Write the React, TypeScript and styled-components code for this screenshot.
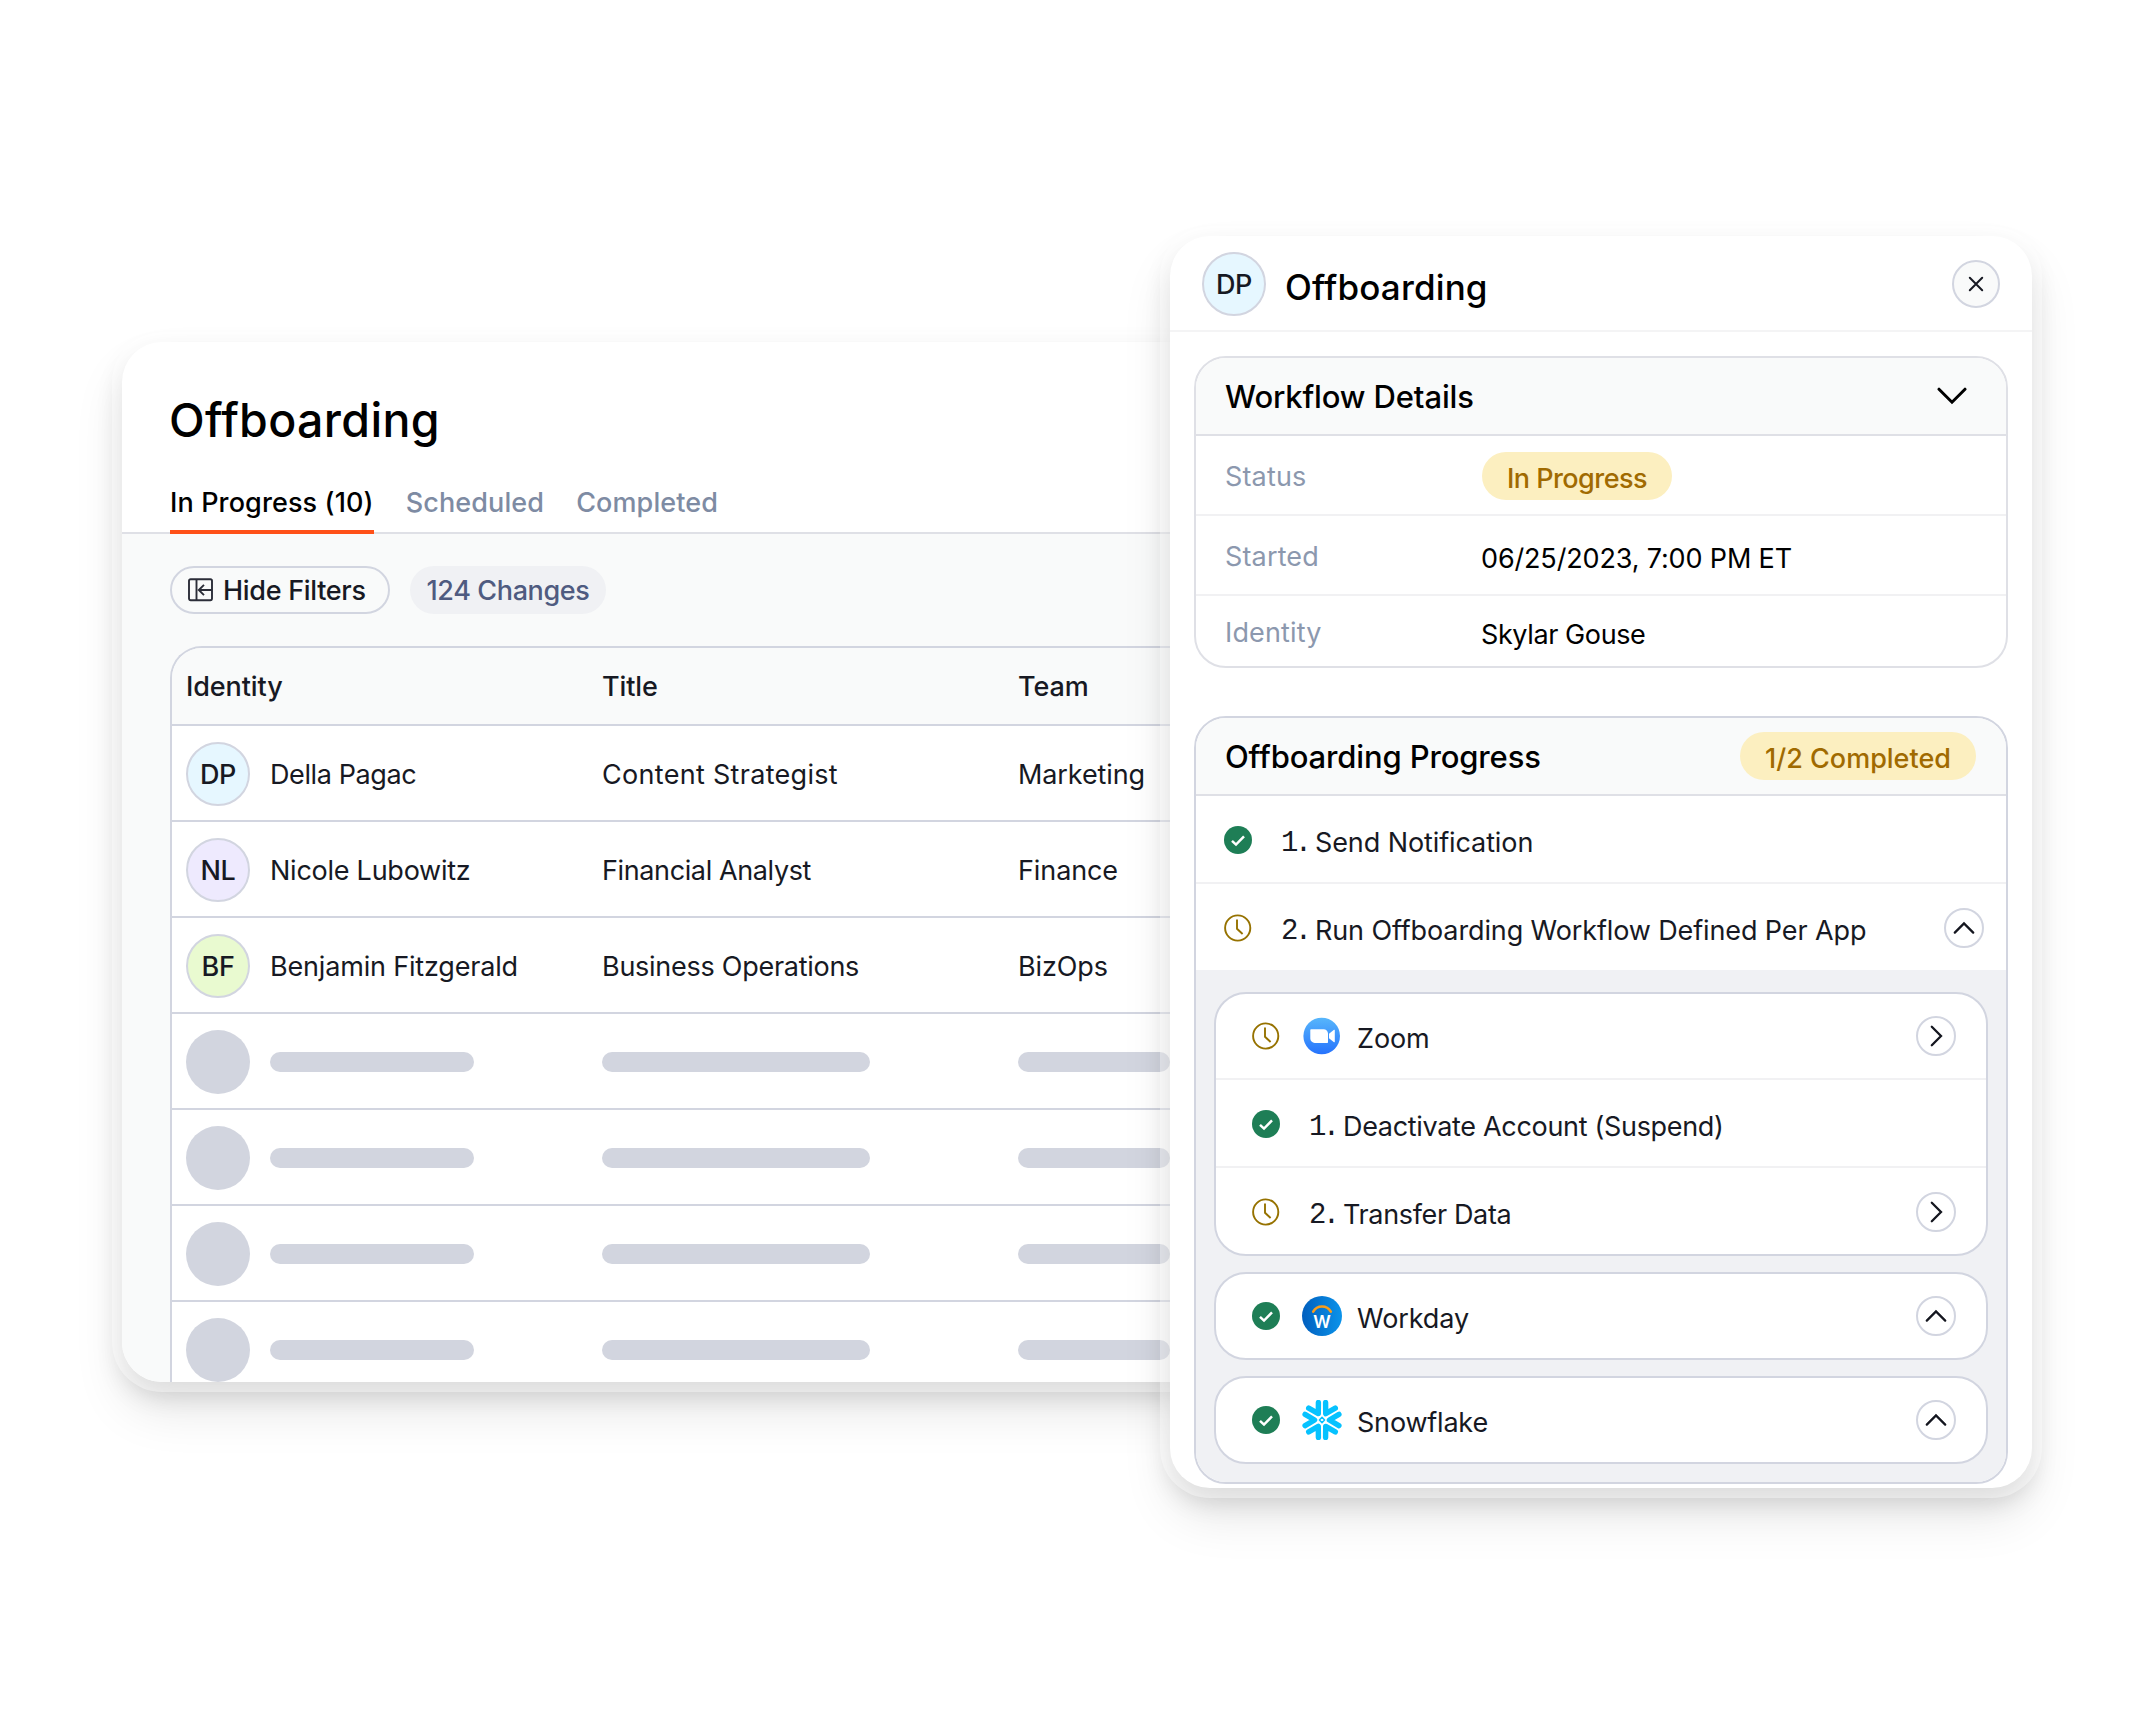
import React from "react";
import styled, { createGlobalStyle, css } from "styled-components";

// === Global ===

const GlobalStyle = createGlobalStyle`
  :root {
    --color-white: #ffffff;
    --color-surface: #f9fafa;
    --color-sunken: #f0f1f4;
    --color-border: #d2d5e0;
    --color-border-soft: #dfe0e6;
    --color-border-light: #f1f1f3;
    --color-skeleton: #d2d5df;
    --color-text: #000000;
    --color-text-primary: #171923;
    --color-text-muted: #8c98ae;
    --color-accent: #ff5018;
    --weight-medium: 500;
  }

  * {
    box-sizing: border-box;
  }

  body {
    margin: 0;
    background: var(--color-white);
    font-family: Inter, "Liberation Sans", sans-serif;
    font-size: 27px;
    line-height: 30px;
    color: var(--color-text-primary);
  }
`;

// === Shared styles ===

const Stage = styled.main`
  width: 2151px;
  height: 1721px;
  padding: 236px 0 0 122px;
  display: flex;
  align-items: flex-start;
  overflow: hidden;
`;

const cardFrame = css`
  flex: none;
  border-radius: 40px;
  background: var(--color-white);
  box-shadow:
    0 0 0 10px rgba(255, 255, 255, 0.4),
    0 12px 26px rgba(0, 0, 0, 0.15),
    0 28px 50px rgba(0, 0, 0, 0.1);
`;

const Txt = styled.span<{ $track?: number }>`
  padding-top: 2px;
  white-space: nowrap;
  letter-spacing: ${(props) => props.$track ?? -0.1}px;
`;

const Avatar = styled.div<{ $color: string }>`
  flex: none;
  width: 64px;
  height: 64px;
  padding-top: 1px;
  border: 2px solid var(--color-border);
  border-radius: 50%;
  background: ${(props) => props.$color};
  display: flex;
  align-items: center;
  justify-content: center;
  font-weight: 500;
  letter-spacing: -0.3px;
`;

// === List card ===

const ListCard = styled.section`
  ${cardFrame}
  width: 1100px;
  height: 1040px;
  margin-top: 106px;
  display: flex;
  flex-direction: column;
`;

const ListTitle = styled.h1`
  margin: 0;
  padding: 48px 47px 0;
  font-size: 46.5px;
  font-weight: var(--weight-medium);
  line-height: 60px;
  letter-spacing: 0.35px;
  color: var(--color-text);
`;

const Tabs = styled.nav`
  display: flex;
  gap: 32px;
  margin-top: 38px;
  padding: 0 48px;
  box-shadow: inset 0 -2px 0 var(--color-border-soft);
`;

const Tab = styled.a<{ $active?: boolean }>`
  padding-bottom: 12px;
  border-bottom: 4px solid
    ${(props) => (props.$active ? "var(--color-accent)" : "transparent")};
  font-weight: var(--weight-medium);
  letter-spacing: 0.12px;
  color: ${(props) => (props.$active ? "var(--color-text)" : "#7e8ba3")};
`;

const ListBody = styled.div`
  flex: 1;
  min-height: 0;
  padding: 32px 0 0 48px;
  border-radius: 0 0 40px 40px;
  background: var(--color-surface);
  overflow: hidden;
`;

const Toolbar = styled.div`
  display: flex;
  gap: 20px;
`;

const FilterButton = styled.button`
  width: 220px;
  height: 48px;
  padding: 0 0 0 16px;
  border: 2px solid var(--color-border);
  border-radius: 24px;
  background: var(--color-surface);
  display: flex;
  align-items: center;
  gap: 9px;
  font: inherit;
  font-weight: var(--weight-medium);
  color: inherit;
`;

const CountPill = styled.div`
  width: 196px;
  height: 48px;
  border-radius: 24px;
  background: var(--color-sunken);
  display: flex;
  align-items: center;
  justify-content: center;
  font-weight: var(--weight-medium);
  color: #4f5b80;
`;

const Table = styled.div`
  margin-top: 32px;
  border: 2px solid var(--color-border);
  border-right: none;
  border-radius: 32px 0 0 0;
  overflow: hidden;
`;

const TableRow = styled.div<{ $head?: boolean }>`
  display: grid;
  grid-template-columns: 416px 416px 1fr;
  align-items: center;
  height: ${(props) => (props.$head ? 78 : 96)}px;
  padding: ${(props) => (props.$head ? 0 : 2)}px 0 0 14px;
  border-bottom: 2px solid var(--color-border);
  background: ${(props) =>
    props.$head ? "var(--color-surface)" : "var(--color-white)"};
  font-weight: ${(props) => (props.$head ? "var(--weight-medium)" : 400)};
`;

const IdentityCell = styled.div`
  display: flex;
  align-items: center;
  gap: 20px;
`;

const SkeletonDot = styled.div`
  width: 64px;
  height: 64px;
  border-radius: 50%;
  background: var(--color-skeleton);
`;

const SkeletonBar = styled.div<{ $width: number }>`
  width: ${(props) => props.$width}px;
  height: 20px;
  border-radius: 10px;
  background: var(--color-skeleton);
`;

// === Detail card ===

const DetailCard = styled.section`
  ${cardFrame}
  position: relative;
  width: 862px;
  height: 1252px;
  margin-left: -52px;
`;

const DetailHeader = styled.header`
  height: 96px;
  padding: 2px 32px 0;
  border-bottom: 2px solid #f4f4f5;
  display: flex;
  align-items: center;
`;

const DetailTitle = styled.h2`
  flex: 1;
  margin: 0;
  padding: 5px 0 0 19px;
  font-size: 35px;
  font-weight: var(--weight-medium);
  line-height: 44px;
  letter-spacing: 0.15px;
  color: var(--color-text);
`;

const CloseButton = styled.button`
  width: 48px;
  height: 48px;
  padding: 0;
  border: 2px solid var(--color-border);
  border-radius: 50%;
  background: var(--color-surface);
  display: flex;
  align-items: center;
  justify-content: center;
`;

const DetailBody = styled.div`
  padding: 24px 24px 0;
  display: flex;
  flex-direction: column;
  gap: 48px;
`;

const Panel = styled.div<{ $soft?: boolean }>`
  border: 2px solid
    ${(props) =>
      props.$soft ? "var(--color-border-soft)" : "var(--color-border)"};
  border-radius: 32px;
  overflow: hidden;
`;

const PanelHeader = styled.div<{ $right: number }>`
  height: 78px;
  padding: 0 ${(props) => props.$right}px 0 29px;
  border-bottom: 2px solid var(--color-border-soft);
  background: var(--color-surface);
  display: flex;
  align-items: center;
  justify-content: space-between;
`;

const PanelTitle = styled.h3`
  margin: 0;
  padding-top: 2px;
  font-size: 31px;
  font-weight: var(--weight-medium);
  letter-spacing: -0.14px;
  color: var(--color-text);
`;

const Badge = styled.div<{ $width: number }>`
  width: ${(props) => props.$width}px;
  height: 48px;
  padding-top: 4px;
  border-radius: 24px;
  background: #fcefc0;
  display: flex;
  align-items: center;
  justify-content: center;
  font-weight: var(--weight-medium);
  color: #a06a00;
`;

const Field = styled.div`
  height: 80px;
  padding: 2px 0 0 29px;
  border-bottom: 2px solid var(--color-border-light);
  display: grid;
  grid-template-columns: 257px 1fr;
  align-items: center;

  &:last-child {
    height: 70px;
    border-bottom: none;
  }
`;

const FieldLabel = styled.span`
  padding-top: 2px;
  color: var(--color-text-muted);
  letter-spacing: 0.15px;
`;

const FieldValue = styled.span<{ $track?: number }>`
  padding-top: 6px;
  margin-left: -1px;
  letter-spacing: ${(props) => props.$track ?? -0.15}px;
  color: var(--color-text);
`;

const StepRow = styled.div<{ $last?: boolean }>`
  height: ${(props) => (props.$last ? 86 : 88)}px;
  padding: 2px 22px 0 28px;
  border-bottom: ${(props) => (props.$last ? 0 : 2)}px solid
    var(--color-border-light);
  display: flex;
  align-items: center;
`;

const AppStepRow = styled(StepRow)`
  padding: 2px 30px 0 36px;
`;

const AppRow = styled(AppStepRow)`
  height: ${(props) => (props.$last ? 84 : 86)}px;
  padding-top: 0;
`;

const StepNumber = styled.span`
  width: 34px;
  margin-left: 29px;
  padding-top: 7px;
  font-family: "Liberation Mono", monospace;
  font-size: 29px;
  letter-spacing: -3.6px;
`;

const StepLabel = styled.span<{ $track?: number }>`
  flex: 1;
  padding-top: 6px;
  white-space: nowrap;
  letter-spacing: ${(props) => props.$track ?? -0.1}px;
`;

const AppLogo = styled.div`
  width: 40px;
  height: 40px;
  margin: 0 15px 0 22px;
`;

const ToggleButton = styled.button`
  flex: none;
  width: 40px;
  height: 40px;
  padding: 0;
  border: 2px solid var(--color-border);
  border-radius: 50%;
  background: var(--color-white);
  display: flex;
  align-items: center;
  justify-content: center;
`;

const AppList = styled.div`
  padding: 22px 18px 18px;
  background: var(--color-sunken);
  display: flex;
  flex-direction: column;
  gap: 16px;
`;

const AppPanel = styled(Panel)`
  background: var(--color-white);
`;

// === Icons ===

const CollapseIcon = () => (
  <svg width="26" height="24" viewBox="0 0 26 24" fill="none" stroke="#2b2d38" strokeWidth="1.9">
    <rect x="1" y="1.2" width="23" height="21" rx="1.6" />
    <path d="M8.5 1.5v20.5M24 12H11M16 6.8L10.8 12l5.2 5.2" />
  </svg>
);

const CloseIcon = () => (
  <svg width="16" height="16" viewBox="0 0 16 16" stroke="#171923" strokeWidth="2" strokeLinecap="round">
    <path d="M1.8 1.8l12.4 12.4M14.2 1.8L1.8 14.2" />
  </svg>
);

const BigChevron = () => (
  <svg width="30" height="18" viewBox="0 0 30 18" fill="none" stroke="#000" strokeWidth="3" strokeLinecap="round">
    <path d="M2 2.2l13 13 13-13" />
  </svg>
);

const Chevron = ({ dir }: { dir: "up" | "right" }) => (
  <svg width="36" height="36" viewBox="2 2 36 36" fill="none" stroke="#14161f" strokeWidth="2.3" strokeLinecap="round">
    <path d={dir === "up" ? "M10.8 24.6L20 15.4l9.2 9.2" : "M15.8 10.8L25 20l-9.2 9.2"} />
  </svg>
);

const StatusIcon = ({ done }: { done: boolean }) =>
  done ? (
    <svg width="28" height="28" viewBox="0 0 28 28" fill="none">
      <circle cx="14" cy="14" r="14" fill="#1e7e56" />
      <path d="M8 14.8l4 3.8 8-8.2" stroke="#fff" strokeWidth="2.5" />
    </svg>
  ) : (
    <svg width="28" height="28" viewBox="0 0 28 28" fill="none" stroke="#967200" strokeWidth="1.9">
      <circle cx="13.7" cy="14" r="12.6" />
      <path d="M13 5.6v9.2l5.6 5.2" />
    </svg>
  );

const ZoomLogo = () => (
  <svg width="40" height="40" viewBox="0 0 40 40">
    <defs>
      <linearGradient id="zoomFill" x1="0" y1="0" x2="0" y2="1">
        <stop offset="0" stopColor="#57b6fb" />
        <stop offset="1" stopColor="#2673fd" />
      </linearGradient>
    </defs>
    <circle cx="19.7" cy="20" r="18.3" fill="url(#zoomFill)" />
    <path
      d="M9 13.2h12.6a4.4 4.4 0 0 1 4.4 4.4v8.6a.7.7 0 0 1-.7.7H12.7a4.4 4.4 0 0 1-4.4-4.4v-8.6a.7.7 0 0 1 .7-.7zM27 17.8l5-4a.5.5 0 0 1 .8.4v11.6a.5.5 0 0 1-.8.4l-5-4z"
      fill="#fff"
    />
  </svg>
);

const LogoLetter = styled.text`
  font-family: Inter, sans-serif;
  font-size: 23px;
  font-weight: 500;
  fill: #fff;
`;

const WorkdayLogo = () => (
  <svg width="40" height="40" viewBox="0 0 40 40">
    <defs>
      <linearGradient id="workdayFill" x1="0" y1="0" x2="1" y2="0">
        <stop offset="0" stopColor="#015fbe" />
        <stop offset="1" stopColor="#0b93ea" />
      </linearGradient>
    </defs>
    <circle cx="20" cy="20" r="20" fill="url(#workdayFill)" />
    <path d="M11.2 15.6a10.2 10.2 0 0 1 17.6 0" fill="none" stroke="#f99d1c" strokeWidth="2.6" strokeLinecap="round" />
    <LogoLetter x="11" y="31.8" textLength="18" lengthAdjust="spacingAndGlyphs">
      w
    </LogoLetter>
  </svg>
);

const SnowflakeLogo = () => (
  <svg width="40" height="40" viewBox="-20 -20 40 40" fill="none" stroke="#06c2ff">
    {[0, 60, 120, 180, 240, 300].map((angle) => (
      <path
        key={angle}
        d="M16.9 5.6L7.4 0l9.5-5.6"
        transform={`rotate(${angle})`}
        strokeWidth="5.4"
        strokeLinecap="round"
        strokeLinejoin="round"
      />
    ))}
    <path d="M0-2.6L2.6 0 0 2.6-2.6 0z" strokeWidth="1.5" strokeLinejoin="round" />
  </svg>
);

// === Data ===

const people = [
  { initials: "DP", color: "#e6f7ff", name: "Della Pagac", nameTrack: -0.4, title: "Content Strategist", titleTrack: 0.3, team: "Marketing" },
  { initials: "NL", color: "#eeeafe", name: "Nicole Lubowitz", nameTrack: -0.25, title: "Financial Analyst", titleTrack: -0.38, team: "Finance" },
  { initials: "BF", color: "#e9fad0", name: "Benjamin Fitzgerald", nameTrack: -0.18, title: "Business Operations", titleTrack: -0.27, team: "BizOps" },
];

const skeletonRows = [0, 1, 2, 3];

// === Components ===

const OffboardingList: React.FC = () => (
  <ListCard>
    <ListTitle>Offboarding</ListTitle>
    <Tabs>
      <Tab $active>In Progress (10)</Tab>
      <Tab>Scheduled</Tab>
      <Tab>Completed</Tab>
    </Tabs>
    <ListBody>
      <Toolbar>
        <FilterButton>
          <CollapseIcon />
          <Txt $track={-0.3}>Hide Filters</Txt>
        </FilterButton>
        <CountPill>
          <Txt $track={-0.38}>124 Changes</Txt>
        </CountPill>
      </Toolbar>
      <Table>
        <TableRow $head>
          <Txt>Identity</Txt>
          <Txt>Title</Txt>
          <Txt>Team</Txt>
        </TableRow>
        {people.map((person) => (
          <TableRow key={person.initials}>
            <IdentityCell>
              <Avatar $color={person.color}>{person.initials}</Avatar>
              <Txt $track={person.nameTrack}>{person.name}</Txt>
            </IdentityCell>
            <Txt $track={person.titleTrack}>{person.title}</Txt>
            <Txt>{person.team}</Txt>
          </TableRow>
        ))}
        {skeletonRows.map((row) => (
          <TableRow key={row}>
            <IdentityCell>
              <SkeletonDot />
              <SkeletonBar $width={204} />
            </IdentityCell>
            <SkeletonBar $width={268} />
            <SkeletonBar $width={152} />
          </TableRow>
        ))}
      </Table>
    </ListBody>
  </ListCard>
);

const OffboardingDetail: React.FC = () => (
  <DetailCard>
    <DetailHeader>
      <Avatar $color="#e6f7ff">DP</Avatar>
      <DetailTitle>Offboarding</DetailTitle>
      <CloseButton>
        <CloseIcon />
      </CloseButton>
    </DetailHeader>
    <DetailBody>
      <Panel $soft>
        <PanelHeader $right={39}>
          <PanelTitle>Workflow Details</PanelTitle>
          <BigChevron />
        </PanelHeader>
        <Field>
          <FieldLabel>Status</FieldLabel>
          <Badge $width={190}>
            <Txt $track={-0.55}>In Progress</Txt>
          </Badge>
        </Field>
        <Field>
          <FieldLabel>Started</FieldLabel>
          <FieldValue>06/25/2023, 7:00 PM ET</FieldValue>
        </Field>
        <Field>
          <FieldLabel>Identity</FieldLabel>
          <FieldValue $track={-0.4}>Skylar Gouse</FieldValue>
        </Field>
      </Panel>
      <Panel>
        <PanelHeader $right={30}>
          <PanelTitle>Offboarding Progress</PanelTitle>
          <Badge $width={236}>
            <Txt $track={0}>1/2 Completed</Txt>
          </Badge>
        </PanelHeader>
        <StepRow>
          <StatusIcon done />
          <StepNumber>1.</StepNumber>
          <StepLabel>Send Notification</StepLabel>
        </StepRow>
        <StepRow $last>
          <StatusIcon done={false} />
          <StepNumber>2.</StepNumber>
          <StepLabel $track={-0.12}>Run Offboarding Workflow Defined Per App</StepLabel>
          <ToggleButton>
            <Chevron dir="up" />
          </ToggleButton>
        </StepRow>
        <AppList>
          <AppPanel>
            <AppRow>
              <StatusIcon done={false} />
              <AppLogo>
                <ZoomLogo />
              </AppLogo>
              <StepLabel>Zoom</StepLabel>
              <ToggleButton>
                <Chevron dir="right" />
              </ToggleButton>
            </AppRow>
            <AppStepRow>
              <StatusIcon done />
              <StepNumber>1.</StepNumber>
              <StepLabel $track={-0.32}>Deactivate Account (Suspend)</StepLabel>
            </AppStepRow>
            <AppStepRow $last>
              <StatusIcon done={false} />
              <StepNumber>2.</StepNumber>
              <StepLabel $track={-0.35}>Transfer Data</StepLabel>
              <ToggleButton>
                <Chevron dir="right" />
              </ToggleButton>
            </AppStepRow>
          </AppPanel>
          <AppPanel>
            <AppRow $last>
              <StatusIcon done />
              <AppLogo>
                <WorkdayLogo />
              </AppLogo>
              <StepLabel>Workday</StepLabel>
              <ToggleButton>
                <Chevron dir="up" />
              </ToggleButton>
            </AppRow>
          </AppPanel>
          <AppPanel>
            <AppRow $last>
              <StatusIcon done />
              <AppLogo>
                <SnowflakeLogo />
              </AppLogo>
              <StepLabel $track={-0.2}>Snowflake</StepLabel>
              <ToggleButton>
                <Chevron dir="up" />
              </ToggleButton>
            </AppRow>
          </AppPanel>
        </AppList>
      </Panel>
    </DetailBody>
  </DetailCard>
);

const App: React.FC = () => (
  <>
    <GlobalStyle />
    <Stage>
      <OffboardingList />
      <OffboardingDetail />
    </Stage>
  </>
);

export default App;
